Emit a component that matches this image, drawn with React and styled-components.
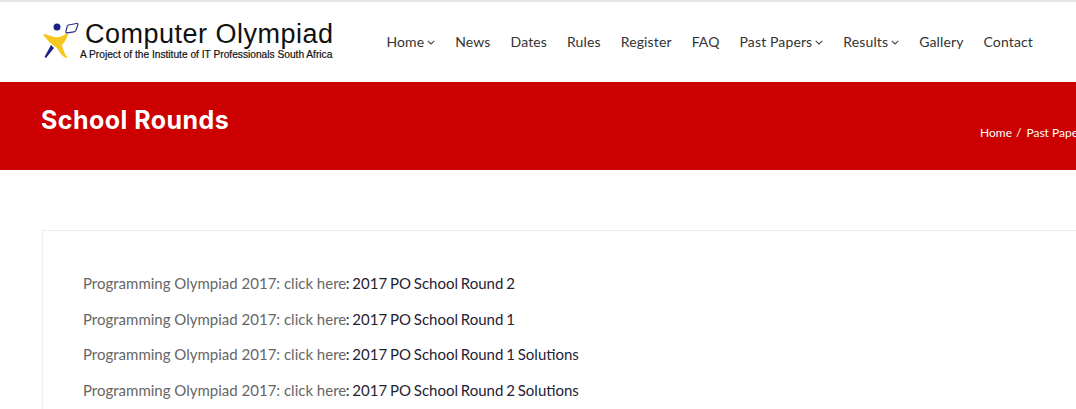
import React from 'react'
import styled, { createGlobalStyle } from 'styled-components'

const GlobalStyle = createGlobalStyle`
    html, body {
        margin: 0;
        padding: 0;
        background: #fff;
        overflow: hidden;
    }
    body {
        font-family: Lato, "Liberation Sans", sans-serif;
    }
`;

const navItems = [
    { label: 'Home', caret: true },
    { label: 'News' },
    { label: 'Dates' },
    { label: 'Rules' },
    { label: 'Register' },
    { label: 'FAQ' },
    { label: 'Past Papers', caret: true },
    { label: 'Results', caret: true },
    { label: 'Gallery' },
    { label: 'Contact' },
]

const papers = [
    '2017 PO School Round 2',
    '2017 PO School Round 1',
    '2017 PO School Round 1 Solutions',
    '2017 PO School Round 2 Solutions',
]

function Caret() {
    return (
        <CaretIcon viewBox="0 0 8 5" aria-hidden="true">
            <path d="M0.7 0.8 L4 4 L7.3 0.8" fill="none" stroke="#444" strokeWidth="1.1" />
        </CaretIcon>
    )
}

function LogoMark() {
    return (
        <Mark viewBox="0 0 36 38" aria-hidden="true">
            <path d="M0 12 C4 12 7 14 11 15 C16 16 21 14 25 10 C25 15 22 20 19 23 C20 28 22 33 25 36 C20 36 17 31 14 26 C10 23 3 18 0 12 Z" fill="#f5c81e" />
            <circle cx="14" cy="5" r="3.5" fill="#1c2384" />
            <path d="M8 23 L11 26 L3 36 L1.5 35 Z" fill="#1c2384" />
            <path d="M25.5 3 L33.5 1.5 C34.6 1.3 35.2 2 34.8 3 L32.8 8.6 C32.5 9.4 32 9.7 31 9.8 L24 10.8 C23 10.9 22.6 10.3 22.9 9.4 L24.3 4.2 C24.5 3.5 24.9 3.1 25.5 3 Z" fill="#fff" stroke="#2a2f86" strokeWidth="1.2" />
        </Mark>
    )
}

function App() {
    return (
        <Page>
            <GlobalStyle />
            <Header>
                <Logo>
                    <LogoMark />
                    <LogoText>
                        <LogoTitle>Computer Olympiad</LogoTitle>
                        <LogoTag>A Project of the Institute of IT Professionals South Africa</LogoTag>
                    </LogoText>
                </Logo>
                <Nav>
                    {navItems.map((item) => (
                        <NavItem key={item.label}>
                            {item.label}
                            {item.caret && <Caret />}
                        </NavItem>
                    ))}
                </Nav>
            </Header>
            <Banner>
                <Title>School Rounds</Title>
                <Crumbs>
                    <span>Home</span>
                    <CrumbSep>/</CrumbSep>
                    <span>Past Papers</span>
                </Crumbs>
            </Banner>
            <Content>
                <Card>
                    {papers.map((paper) => (
                        <Row key={paper}>
                            Programming Olympiad 2017: click here<Strong>: {paper}</Strong>
                        </Row>
                    ))}
                </Card>
            </Content>
        </Page>
    )
}

const Page = styled.div`
    width: 1076px;
    height: 409px;
    overflow: hidden;
    background: #fff;
`;

const Header = styled.header`
    height: 78px;
    padding: 0 43px 2px 43px;
    border-top: 2px solid #e6e6e6;
    display: flex;
    align-items: center;
    justify-content: space-between;
`;

const Logo = styled.div`
    display: flex;
    align-items: flex-start;
`;

const Mark = styled.svg`
    width: 36px;
    height: 38px;
    flex: none;
`;

const LogoText = styled.div`
    display: flex;
    flex-direction: column;
    font-family: "Liberation Sans", Arial, sans-serif;
    color: #111;
`;

const LogoTitle = styled.div`
    font-size: 27px;
    line-height: 25px;
    margin-left: 6px;
    letter-spacing: 0.5px;
    white-space: nowrap;
`;

const LogoTag = styled.div`
    font-size: 10.2px;
    line-height: 12px;
    margin: 2px 0 0 1px;
    -webkit-text-stroke: 0.2px #111;
    white-space: nowrap;
`;

const Nav = styled.nav`
    display: flex;
    align-items: center;
    gap: 20px;
`;

const NavItem = styled.a`
    display: inline-flex;
    align-items: center;
    font-size: 14px;
    color: #333;
    letter-spacing: 0.13px;
    white-space: nowrap;
`;

const CaretIcon = styled.svg`
    width: 8px;
    height: 5px;
    margin-left: 3px;
    margin-top: 2px;
`;

const Banner = styled.section`
    height: 88px;
    background: #cc0000;
    padding: 0 0 0 41px;
    display: flex;
    justify-content: space-between;
    color: #fff;
    overflow: hidden;
`;

const Title = styled.h1`
    margin: 23px 0 0;
    font-family: Inter, "Open Sans", sans-serif;
    font-size: 25px;
    line-height: 30px;
    font-weight: 700;
    letter-spacing: 0.45px;
    white-space: nowrap;
`;

const Crumbs = styled.div`
    flex: none;
    width: 96px;
    margin-top: 44px;
    font-size: 12px;
    line-height: 14px;
    white-space: nowrap;
`;

const CrumbSep = styled.span`
    margin: 0 5px 0 4px;
`;

const Content = styled.main`
    padding: 60px 0 0 42px;
`;

const Card = styled.div`
    border: 1px solid #eee;
    border-right: none;
    padding: 42px 40px 0;
    height: 300px;
`;

const Row = styled.p`
    margin: 0 0 14px;
    font-size: 15px;
    line-height: 21.7px;
    color: #666;
    white-space: nowrap;
`;

const Strong = styled.span`
    color: #1f2235;
    margin-left: -0.5px;
    word-spacing: -1px;
`;

export default App
